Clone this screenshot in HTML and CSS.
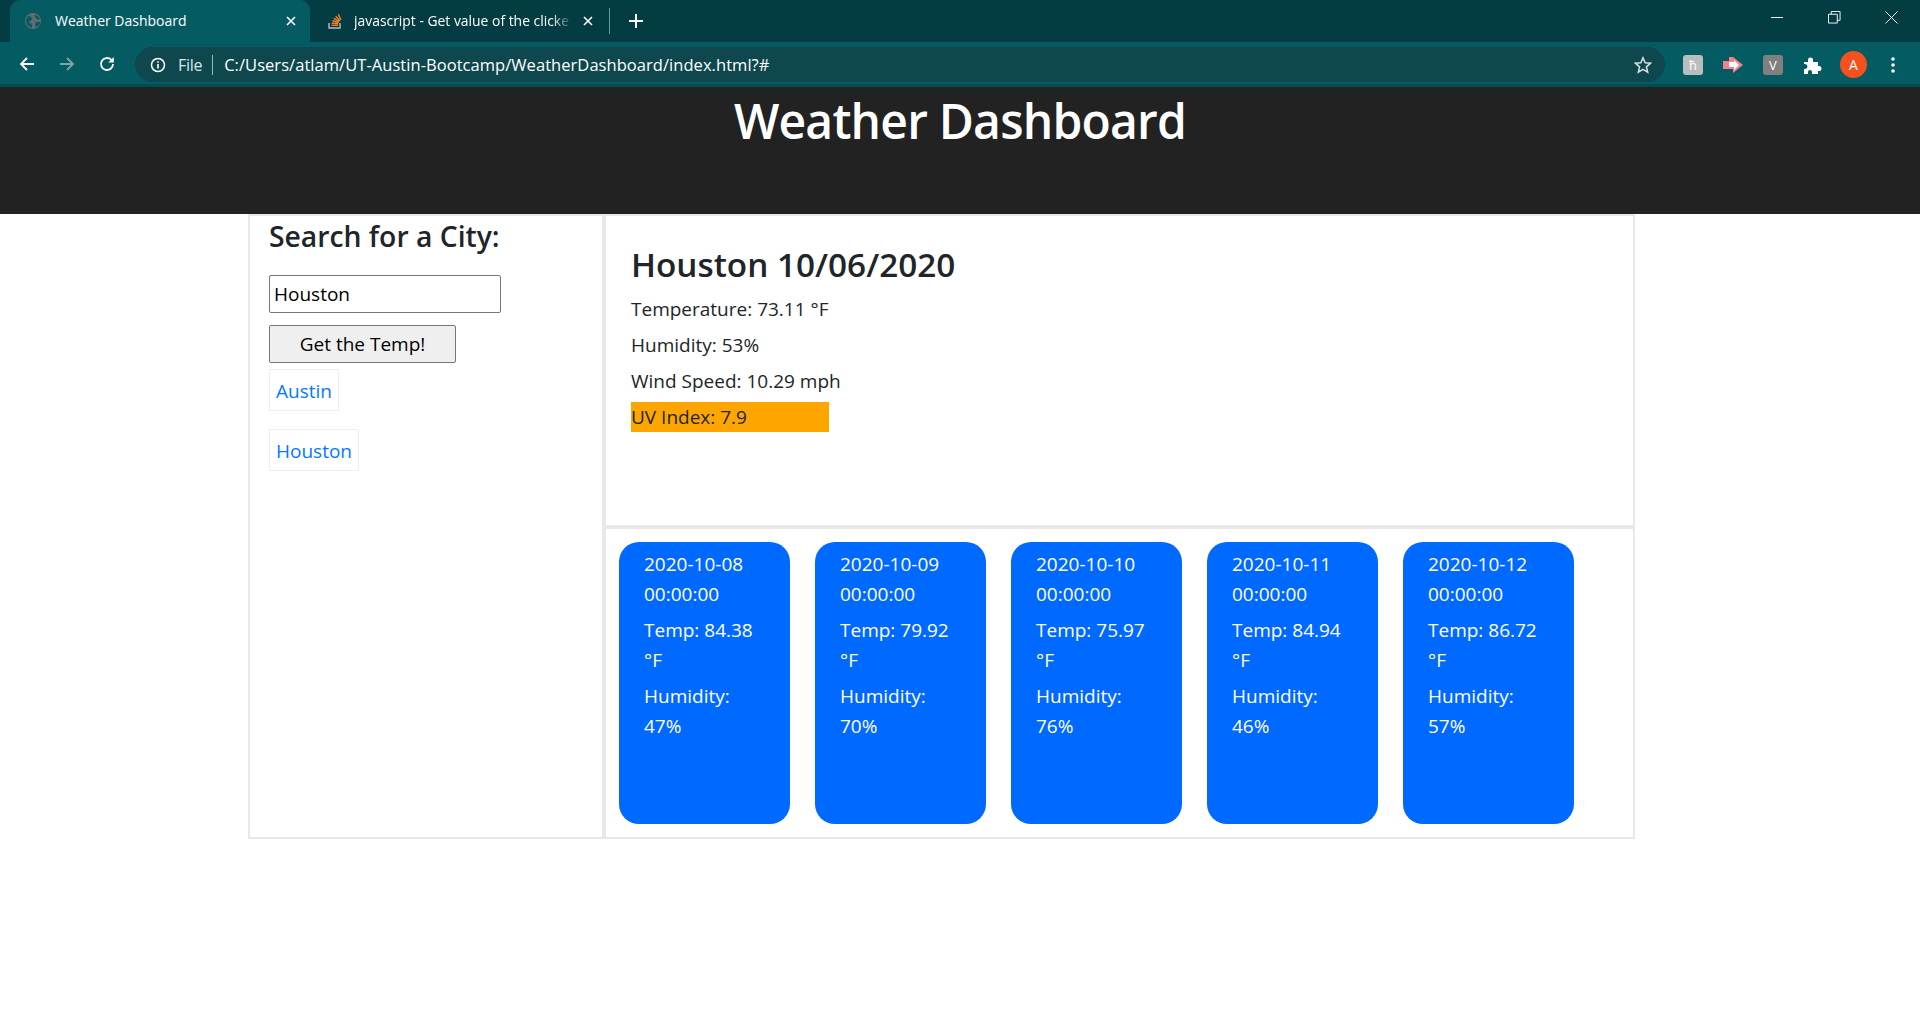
FILE: index.html
```html
<!DOCTYPE html>
<html lang="en">
<head>
  <meta charset="UTF-8" />
  <title>Weather Dashboard</title>
  <link rel="stylesheet" href="styles.css">
</head>
<body>
<!-- browser frame -->
<div class="tabstrip">
  <div class="tab tab-active">
    <svg class="favicon" viewBox="0 0 16 16"><circle cx="8" cy="8" r="8" fill="#5f6b6e"/><path d="M3 3c2 0 4 1 4 3S4 7 4 9s3 1 3 3 0 3 0 3L2 12 1 7zM10 2c2 0 4 2 5 4-2 1-3 0-4-1s-2-2-1-3zM11 9c2 0 3 0 4 0 0 2-2 5-4 5-1-1-1-4 0-5z" fill="#045c62"/></svg>
    <span class="tab-title">Weather Dashboard</span>
    <svg class="tab-close" viewBox="0 0 10 10"><path d="M1 1l8 8M9 1l-8 8" stroke="#fff" stroke-width="1.6"/></svg>
  </div>
  <div class="tab tab-other">
    <svg class="favicon" viewBox="0 0 16 16"><path d="M2 10v5h11v-5" fill="none" stroke="#bcbbbb" stroke-width="1.4"/><path d="M4.5 12.4h6.5M4.7 10.2l6.4.6M5.4 7.8l6.2 1.7M6.7 5.4l5.6 3M8.7 3.2l4.4 4.5M11.3 1.2l2.6 5.6" stroke="#f48024" stroke-width="1.4" fill="none"/></svg>
    <span class="tab-title">javascript - Get value of the clicke</span>
    <svg class="tab-close" viewBox="0 0 10 10"><path d="M1 1l8 8M9 1l-8 8" stroke="#fff" stroke-width="1.6"/></svg>
  </div>
  <div class="tab-sep"></div>
  <svg class="new-tab" viewBox="0 0 14 14"><path d="M7 0v14M0 7h14" stroke="#fff" stroke-width="2"/></svg>
  <div class="win-controls">
    <svg viewBox="0 0 14 14"><path d="M0 7h13" stroke="#fff"/></svg>
    <svg viewBox="0 0 14 14"><path d="M.5 3.5h9.5v9.5H.5zM3.5 3.5V.5h9.5v9.5H10" fill="none" stroke="#fff"/></svg>
    <svg viewBox="0 0 14 14"><path d="M.5.5l13 13M13.500.5l-13 13" stroke="#fff"/></svg>
  </div>
</div>
<div class="toolbar">
  <svg class="nav-icon" viewBox="0 0 16 16"><path d="M15 8H2M8 2L2 8l6 6" fill="none" stroke="#fff" stroke-width="1.8"/></svg>
  <svg class="nav-icon" viewBox="0 0 16 16"><path d="M1 8h13M8 2l6 6-6 6" fill="none" stroke="#7fa5a8" stroke-width="1.8"/></svg>
  <svg class="nav-icon nav-last" viewBox="0 0 16 16"><path d="M14 8a6 6 0 1 1-1.800-4.300" fill="none" stroke="#fff" stroke-width="1.800"/><path d="M14.800 1v5.500H9.300z" fill="#fff"/></svg>
  <div class="omnibox">
    <svg class="info-icon" viewBox="0 0 16 16"><circle cx="8" cy="8" r="6.500" fill="none" stroke="#fff" stroke-width="1.500"/><path d="M8 7v4.500M8 4.200v1.600" stroke="#fff" stroke-width="1.600"/></svg>
    <span class="omni-file">File</span>
    <span class="omni-sep"></span>
    <span class="omni-url">C:/Users/atlam/UT-Austin-Bootcamp/WeatherDashboard/index.html?#</span>
    <svg class="star-icon" viewBox="0 0 20 20"><path d="M10 2l2.400 5.500 6 .5-4.600 4 1.400 5.900L10 14.800l-5.200 3.100L6.200 12 1.600 8l6-.5z" fill="none" stroke="#d5e0e1" stroke-width="1.700"/></svg>
  </div>
  <div class="extensions">
    <span class="ext ext-h">ћ</span>
    <svg class="ext-svg" viewBox="0 0 20 20"><path d="M0 6h6V2h4l10 8-10 8v-4H0z" fill="#f4828c"/><path d="M6 7h5V5l5 5-5 5v-3H6z" fill="#fff"/></svg>
    <span class="ext ext-v">V</span>
    <svg class="ext-svg" viewBox="0 0 20 20"><path d="M1 7h4V5a2.500 2.500 0 0 1 5 0v2h5v4h1a2.500 2.500 0 0 1 0 5h-1v3H9v-2a2 2 0 0 0-4 0v2H1v-5h1a2.500 2.500 0 0 0 0-5H1z" fill="#fff"/></svg>
    <span class="avatar">A</span>
    <svg class="ext-dots" viewBox="0 0 4 16"><circle cx="2" cy="2" r="1.800" fill="#fff"/><circle cx="2" cy="8" r="1.800" fill="#fff"/><circle cx="2" cy="14" r="1.800" fill="#fff"/></svg>
  </div>
</div>

<!-- page -->
<header class="jumbo">
  <h1>Weather Dashboard</h1>
</header>
<main class="dash">
  <aside class="sidebar">
    <h3>Search for a City:</h3>
    <input class="city-input" type="text" value="Houston">
    <button class="get-btn" type="button">Get the Temp!</button>
    <ul class="city-list">
      <li><a href="#">Austin</a></li>
      <li><a href="#">Houston</a></li>
    </ul>
  </aside>
  <section class="content">
    <div class="today">
      <h2>Houston 10/06/2020</h2>
      <p>Temperature: 73.11 °F</p>
      <p>Humidity: 53%</p>
      <p>Wind Speed: 10.29 mph</p>
      <p class="uv">UV Index: 7.9</p>
    </div>
    <div class="forecast">
      <div class="card"><p>2020-10-08 00:00:00</p><p>Temp: 84.38 °F</p><p>Humidity: 47%</p></div>
      <div class="card"><p>2020-10-09 00:00:00</p><p>Temp: 79.92 °F</p><p>Humidity: 70%</p></div>
      <div class="card"><p>2020-10-10 00:00:00</p><p>Temp: 75.97 °F</p><p>Humidity: 76%</p></div>
      <div class="card"><p>2020-10-11 00:00:00</p><p>Temp: 84.94 °F</p><p>Humidity: 46%</p></div>
      <div class="card"><p>2020-10-12 00:00:00</p><p>Temp: 86.72 °F</p><p>Humidity: 57%</p></div>
    </div>
  </section>
</main>
</body>
</html>
```

FILE: styles.css
```css
* {
  box-sizing: border-box;
}

body {
  margin: 0;
  background: #fff;
  color: #212529;
  font-family: "Open Sans", "Noto Sans", sans-serif;
  font-size: 19px;
  line-height: 30px;
}

p {
  margin: 0 0 6px;
}

/* browser frame */
.tabstrip {
  height: 42px;
  background: #033c42;
  display: flex;
  align-items: flex-end;
  padding-left: 10px;
  color: #fff;
  font-size: 13px;
}

.tab {
  height: 42px;
  display: flex;
  align-items: center;
  line-height: 20px;
}

.tab-active {
  width: 300px;
  padding: 0 14px 0 15px;
  background: #045c62;
  border-radius: 10px 10px 0 0;
}

.tab-other {
  width: 297px;
  padding: 0 14px 0 17px;
}

.tab-other .favicon {
  margin-right: 11px;
}

.tab-other .tab-title {
  font-size: 13.9px;
  -webkit-mask-image: linear-gradient(to right, #000 90%, transparent);
  mask-image: linear-gradient(to right, #000 90%, transparent);
}

.favicon {
  width: 16px;
  height: 16px;
  margin-right: 14px;
  flex: none;
}

.tab-title {
  flex: 1;
  white-space: nowrap;
  font-size: 14px;
}

.tab-close {
  width: 10px;
  height: 10px;
  margin-left: 10px;
  flex: none;
}

.tab-sep {
  width: 1px;
  height: 26px;
  margin: 0 0 8px 2px;
  background: #6f9497;
}

.new-tab {
  width: 14px;
  height: 14px;
  margin: 0 0 14px 19px;
}

.win-controls {
  margin-left: auto;
  display: flex;
  align-self: flex-start;
  margin-top: 11px;
  margin-right: 22px;
  gap: 44px;
}

.win-controls svg {
  width: 13px;
  height: 13px;
}

.toolbar {
  height: 45px;
  background: #045c62;
  display: flex;
  align-items: flex-start;
  padding: 5px 0 0 19px;
  border-bottom: 3px solid #034c52;
}

.nav-icon {
  width: 16px;
  height: 16px;
  margin: 9px 24px 0 0;
  flex: none;
}

.nav-last {
  margin-right: 20px;
}

.omnibox {
  width: 1530px;
  height: 35px;
  padding: 0 13px 0 15px;
  background: #0e474e;
  border-radius: 18px;
  display: flex;
  align-items: center;
  color: #fff;
  font-size: 16.5px;
  line-height: 20px;
}

.info-icon {
  width: 16px;
  height: 16px;
  margin-right: 12px;
}

.omni-file {
  font-size: 16px;
  color: #dbe6e7;
  letter-spacing: -0.3px;
}

.omni-sep {
  width: 1px;
  height: 20px;
  margin: 0 11px 0 10px;
  background: #9db7b9;
}

.omni-url {
  flex: 1;
  letter-spacing: 0.05px;
  white-space: nowrap;
}

.star-icon {
  width: 18px;
  height: 18px;
}

.extensions {
  display: flex;
  align-items: center;
  height: 35px;
  padding-left: 18px;
  gap: 20px;
}

.ext {
  width: 20px;
  height: 20px;
  border-radius: 3px;
  text-align: center;
  font-size: 13px;
  line-height: 20px;
  color: #fff;
}

.ext-h {
  background: #b9bdbd;
}

.ext-v {
  background: #808080;
}

.ext-svg {
  width: 20px;
  height: 20px;
}

.avatar {
  width: 27px;
  height: 27px;
  margin-left: -3px;
  border-radius: 50%;
  background: #f4511e;
  color: #fff;
  font-size: 14px;
  line-height: 27px;
  text-align: center;
}

.ext-dots {
  width: 4px;
  height: 16px;
  margin-left: 4px;
}

/* page */
.jumbo {
  height: 127px;
  background: #222222;
  color: #fff;
  text-align: center;
}

.jumbo h1 {
  margin: 0;
  font-size: 48px;
  font-weight: 600;
  line-height: 68px;
  letter-spacing: -0.8px;
}

.dash {
  width: 1387px;
  height: 625px;
  margin-left: 248px;
  display: flex;
  border: 2px solid #e9e7e7;
}

.sidebar {
  width: 356px;
  padding: 0 19px;
  border-right: 4px solid #e9e7e7;
  flex: none;
}

.sidebar h3 {
  margin: 0 0 19px;
  font-size: 28.3px;
  font-weight: 600;
  line-height: 40px;
}

.city-input {
  display: block;
  width: 232px;
  height: 38px;
  padding: 0 4px;
  border: 1px solid #767676;
  border-radius: 2px;
  font: inherit;
  color: #000;
}

.get-btn {
  display: block;
  width: 187px;
  height: 38px;
  margin-top: 12px;
  padding: 0;
  border: 1px solid #767676;
  border-radius: 2px;
  background: #efefef;
  font: inherit;
  color: #000;
}

.city-list {
  margin: 6px 0 0;
  padding: 0;
  list-style: none;
}

.city-list li {
  margin-bottom: 18px;
}

.city-list a {
  display: inline-block;
  height: 42px;
  padding: 6px 6px 0;
  border: 1px solid #eeeeee;
  color: #007bff;
  text-decoration: none;
}

.content {
  flex: 1;
  display: flex;
  flex-direction: column;
}

.today {
  height: 313px;
  padding: 24px 25px 0;
  border-bottom: 4px solid #e9e7e7;
}

.today h2 {
  margin: 0 0 6px;
  font-size: 33.3px;
  font-weight: 600;
  line-height: 48px;
}

.uv {
  width: 198px;
  background: orange;
}

.forecast {
  flex: 1;
  display: flex;
  gap: 25px;
  padding: 13px;
}

.card {
  width: 171px;
  height: 282px;
  padding: 7px 25px;
  background: #0069ff;
  color: #fff;
  border-radius: 20px;
}
```
